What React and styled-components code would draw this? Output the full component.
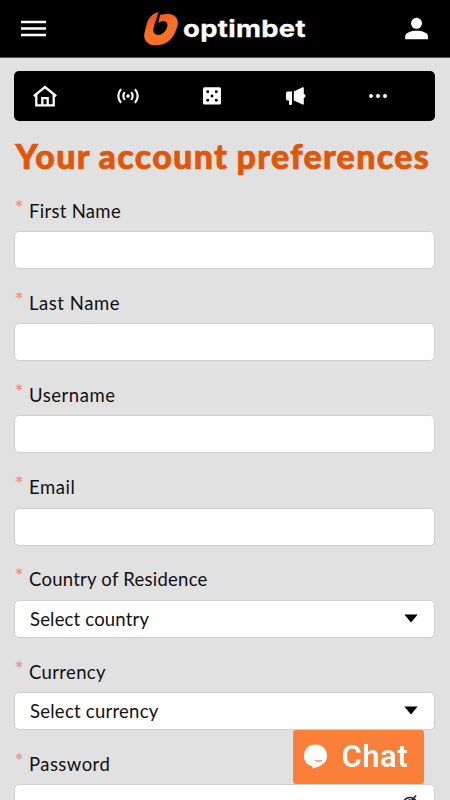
import React from "react";
import styled, { createGlobalStyle } from "styled-components";

const GlobalStyle = createGlobalStyle`
  *, *::before, *::after { box-sizing: border-box; }
  html, body { margin: 0; height: 100%; overflow: hidden; background: #e1e1e1; }
  body { font-family: Lato, "Open Sans", sans-serif; color: #111; }
`;

const Page = styled.div`
  height: 800px;
  overflow: hidden;
  background: #e1e1e1;
`;

const Header = styled.header`
  height: 58px;
  padding: 0 21px;
  display: grid;
  grid-template-columns: 60px 1fr 60px;
  align-items: center;
  background: #000;
  border-bottom: 1px solid #555;
`;

const IconButton = styled.button`
  display: flex;
  justify-content: ${(p) => (p.$end ? "flex-end" : "flex-start")};
  padding: 0;
  border: 0;
  background: none;
  color: #fff;
`;

const Brand = styled.div`
  display: flex;
  align-items: center;
  justify-content: center;
  gap: 5px;
  color: #fff;
`;

const BrandName = styled.span`
  width: 123px;
  font: 700 23px/30px Inter, sans-serif;
  letter-spacing: 0.3px;
  white-space: nowrap;
  transform: scaleX(1.19);
  transform-origin: left center;
  -webkit-text-stroke: 0.3px #fff;
`;

const Main = styled.main`
  padding: 13px 15px 0 14px;
`;

const Nav = styled.nav`
  height: 50px;
  display: grid;
  grid-template-columns: repeat(5, 83.3px);
  margin-bottom: 16px;
  border-radius: 5px;
  background: #000;
  color: #fff;
`;

const NavItem = styled.a`
  display: flex;
  align-items: center;
  padding-left: 19px;
`;

const IconCell = styled.span`
  width: 24px;
  display: flex;
  justify-content: center;
`;

const Title = styled.h1`
  margin: 0;
  height: 64px;
  padding-left: 1.5px;
  font: 900 34px/37px Lato, sans-serif;
  letter-spacing: 1.3px;
  word-spacing: -1px;
  white-space: nowrap;
  color: #e35608;
  -webkit-text-stroke: 0.7px #e35608;
`;

const Field = styled.div`
  height: 92.12px;
`;

const Label = styled.label`
  display: flex;
  height: 30.2px;
  font-size: 18.5px;
  line-height: 20px;
  letter-spacing: ${(p) => p.$tracking}px;
  white-space: nowrap;
`;

const Required = styled.span`
  width: 15px;
  padding-left: 0.5px;
  font-size: 22px;
  letter-spacing: 0;
  line-height: 14px;
  color: #fb8282;
`;

const Control = styled.div`
  height: 38px;
  padding: 0 16px 0 15px;
  display: flex;
  align-items: center;
  justify-content: space-between;
  border: 1px solid #d0d0d0;
  border-radius: 5px;
  background: #fff;
  font-size: 18.5px;
  letter-spacing: ${(p) => p.$tracking || 0}px;
`;

const Toggle = styled.span`
  display: flex;
  margin-left: auto;
`;

const ChatButton = styled.button`
  position: fixed;
  left: 293px;
  top: 729.5px;
  width: 130.5px;
  height: 54px;
  padding: 0 0 0 10px;
  display: flex;
  align-items: center;
  gap: 13.5px;
  border: 0;
  border-radius: 3px;
  background: #fb7e39;
  color: #fff;
  font: 600 31px/54px Roboto, sans-serif;
  letter-spacing: 0.5px;
`;

const MenuIcon = () => (
  <svg width="25" height="18" viewBox="0 0 25 18" fill="#fff">
    <path d="M0 .7h25v2.500H0zM0 7.200h25v2.500H0zM0 13.700h25v2.500H0z" />
  </svg>
);

const UserIcon = () => (
  <svg width="24" height="24" viewBox="0 0 24 24" fill="#fff">
    <circle cx="11.500" cy="6.300" r="5.500" />
    <path d="M.2 22.200V19.200c0-3.600 6-5.500 11.400-5.500S23 15.600 23 19.200v3z" />
  </svg>
);

const LogoMark = () => (
  <svg width="34" height="34" viewBox="0 0 34 34">
    <defs>
      <linearGradient id="brand" x1="0.25" y1="0" x2="0.45" y2="0.45">
        <stop offset="0" stopColor="#f04a24" />
        <stop offset="1" stopColor="#fb7022" />
      </linearGradient>
    </defs>
    <path
      fill="url(#brand)"
      d="M14.500 0C10 .8 4.500 5 2.800 11.500L.4 21.500C-1 28 4 33.300 11.500 33.300c9 0 16-4.500 19.500-12.500l2.300-6C35.500 8 31.500 2 24.500 2c-3 0-6.200.1-8.500.8L14.300 11.200c1.700-1.400 3.600-2.200 5.400-2.100 3.200.2 4.500 3 3.400 6.200-1.500 4.200-4.600 7.500-8.400 7.700-4 .2-6.100-2.700-5.300-6.500C10.500 11.500 12.800 6 14.500 0z"
    />
  </svg>
);

const HomeIcon = () => (
  <svg width="24" height="24" viewBox="0 0 24 24" fill="none" stroke="#fff" strokeWidth="2.300">
    <path d="M.8 12.200 12 3l11.200 9.200M3.300 10.800V21.300h17.400V10.800M9.300 21v-6.800h5.400V21" />
  </svg>
);

const LiveIcon = () => (
  <svg width="24" height="24" viewBox="0 0 24 24" fill="none" stroke="#fff" strokeWidth="2.100">
    <circle cx="12" cy="12" r="1.800" fill="#fff" stroke="none" />
    <path d="M8.800 8.200q-3 3.800 0 7.600M15.200 8.200q3 3.800 0 7.600M5 5.200q-5.400 6.800 0 13.600M19 5.200q5.400 6.800 0 13.600" />
  </svg>
);

const DiceIcon = () => (
  <svg width="24" height="24" viewBox="0 0 24 24">
    <rect x="3" y="3.200" width="18" height="17.400" rx="1.500" fill="#fff" />
    <g fill="#000">
      <circle cx="7.700" cy="7.800" r="1.450" />
      <circle cx="16.300" cy="7.800" r="1.450" />
      <circle cx="12" cy="12" r="1.450" />
      <circle cx="7.700" cy="16.200" r="1.450" />
      <circle cx="16.300" cy="16.200" r="1.450" />
    </g>
  </svg>
);

const PromoIcon = () => (
  <svg width="24" height="24" viewBox="0 0 24 24" fill="#fff">
    <path d="M4.500 7.500H9V20q0 1-1 1H7q-1 0-1-1v-3.500H4.500Q3 16.500 3 14.500v-5q0-2 1.500-2zM10.800 7.500 19.600 3.300q1.200-.4 1.200.6v6.200q1.700.2 1.700 1.900t-1.700 1.900v6q0 1-1.200.6l-8.800-4z" />
  </svg>
);

const MoreIcon = () => (
  <svg width="24" height="24" viewBox="0 0 24 24" fill="#fff">
    <circle cx="5" cy="12" r="2" />
    <circle cx="12" cy="12" r="2" />
    <circle cx="19" cy="12" r="2" />
  </svg>
);

const Caret = () => (
  <svg width="14" height="10" viewBox="0 0 14 10">
    <path d="M.3 .5h13.400L7 8.500z" fill="#000" />
  </svg>
);

const EyeOffIcon = () => (
  <svg width="16" height="16" viewBox="0 0 16 16" fill="none" stroke="#222" strokeWidth="1.500">
    <path d="M1 7.500C4.200.8 11.800.8 15 7.500 11.800 14.200 4.200 14.200 1 7.500zM14 .5 2 15" />
    <circle cx="8" cy="7.500" r="2.500" />
  </svg>
);

const ChatIcon = () => (
  <svg width="25" height="25" viewBox="0 0 25 25">
    <path d="M12.500.5C5.500.5 1 5.300 1 11.800c0 5.800 3 9.200 8.500 10.500v2.200c4.200-1 14.500-3.500 14.500-12.700C24 5 19 .5 12.500.5z" fill="#fff" />
    <path d="M11 15.900q4.500 1 9.200-.1-3.800 4-9.200.1z" fill="#fb7e39" />
  </svg>
);

const navIcons = [HomeIcon, LiveIcon, DiceIcon, PromoIcon, MoreIcon];

const fields = [
  { label: "First Name", tracking: 0.3 },
  { label: "Last Name", tracking: 0.55 },
  { label: "Username", tracking: 0.55 },
  { label: "Email", tracking: 0.55 },
  { label: "Country of Residence", tracking: 0.25, value: "Select country", valueTracking: 0.18 },
  { label: "Currency", tracking: 0.35, value: "Select currency", valueTracking: 0.25 },
  { label: "Password", tracking: 0.45, secret: true },
];

export default function App() {
  return (
    <Page>
      <GlobalStyle />
      <Header>
        <IconButton aria-label="Menu"><MenuIcon /></IconButton>
        <Brand>
          <LogoMark />
          <BrandName>optimbet</BrandName>
        </Brand>
        <IconButton $end aria-label="Account"><UserIcon /></IconButton>
      </Header>
      <Main>
        <Nav>
          {navIcons.map((Icon, i) => (
            <NavItem key={i}><IconCell><Icon /></IconCell></NavItem>
          ))}
        </Nav>
        <Title>Your account preferences</Title>
        {fields.map((f) => (
          <Field key={f.label}>
            <Label $tracking={f.tracking}>
              <Required>*</Required>
              {f.label}
            </Label>
            <Control $tracking={f.valueTracking}>
              {f.value}
              {f.value && <Toggle><Caret /></Toggle>}
              {f.secret && <Toggle><EyeOffIcon /></Toggle>}
            </Control>
          </Field>
        ))}
      </Main>
      <ChatButton><ChatIcon />Chat</ChatButton>
    </Page>
  );
}
